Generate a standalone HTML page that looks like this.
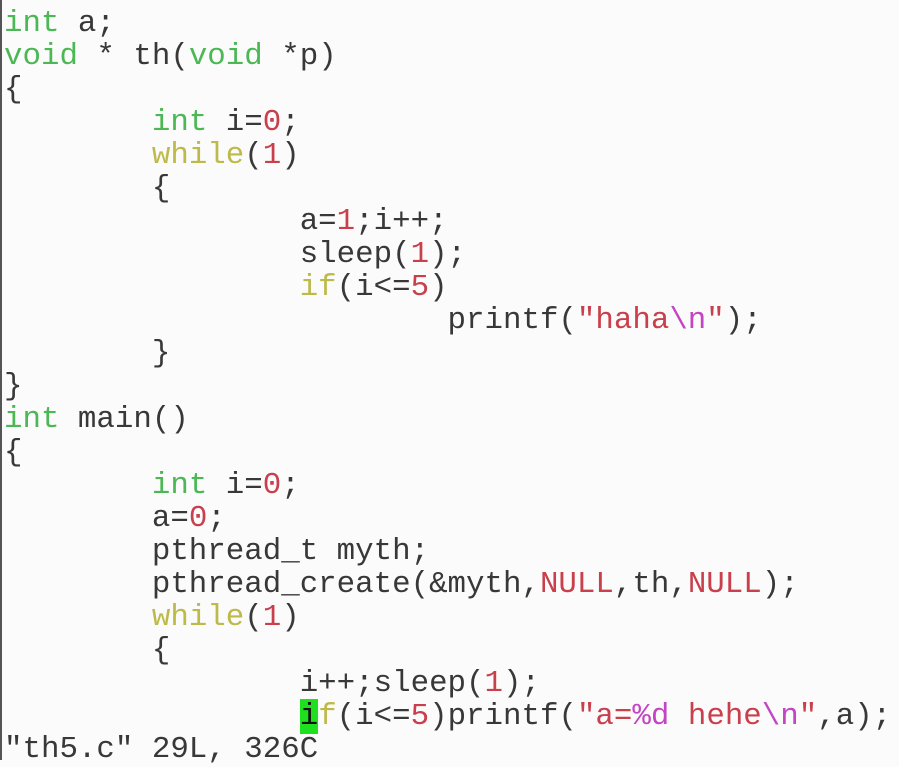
<!DOCTYPE html>
<html><head><style>
html,body{margin:0;padding:0;}
body{width:899px;height:760px;overflow:hidden;background:#fbfbfb;position:relative;}
.bl{position:absolute;left:0;top:0;width:2px;height:760px;background:#555;}
pre{position:absolute;left:4px;top:7px;margin:0;font-family:"Liberation Mono","Courier New",monospace;font-size:30.8px;line-height:33px;color:#383838;letter-spacing:0;}
.g{color:#4cb855}.y{color:#bdba4a}.r{color:#c9404c}.m{color:#c345c3}
.c{background:#1ee01e;color:#111}
</style></head><body><div class="bl"></div>
<pre><span class="g">int</span> a;
<span class="g">void</span> * th(<span class="g">void</span> *p)
{
        <span class="g">int</span> i=<span class="r">0</span>;
        <span class="y">while</span>(<span class="r">1</span>)
        {
                a=<span class="r">1</span>;i++;
                sleep(<span class="r">1</span>);
                <span class="y">if</span>(i&lt;=<span class="r">5</span>)
                        printf(<span class="r">"haha</span><span class="m">\n</span><span class="r">"</span>);
        }
}
<span class="g">int</span> main()
{
        <span class="g">int</span> i=<span class="r">0</span>;
        a=<span class="r">0</span>;
        pthread_t myth;
        pthread_create(&amp;myth,<span class="r">NULL</span>,th,<span class="r">NULL</span>);
        <span class="y">while</span>(<span class="r">1</span>)
        {
                i++;sleep(<span class="r">1</span>);
                <span class="c">i</span><span class="y">f</span>(i&lt;=<span class="r">5</span>)printf(<span class="r">"a=</span><span class="m">%d</span><span class="r"> hehe</span><span class="m">\n</span><span class="r">"</span>,a);
"th5.c" 29L, 326C</pre>
</body></html>
